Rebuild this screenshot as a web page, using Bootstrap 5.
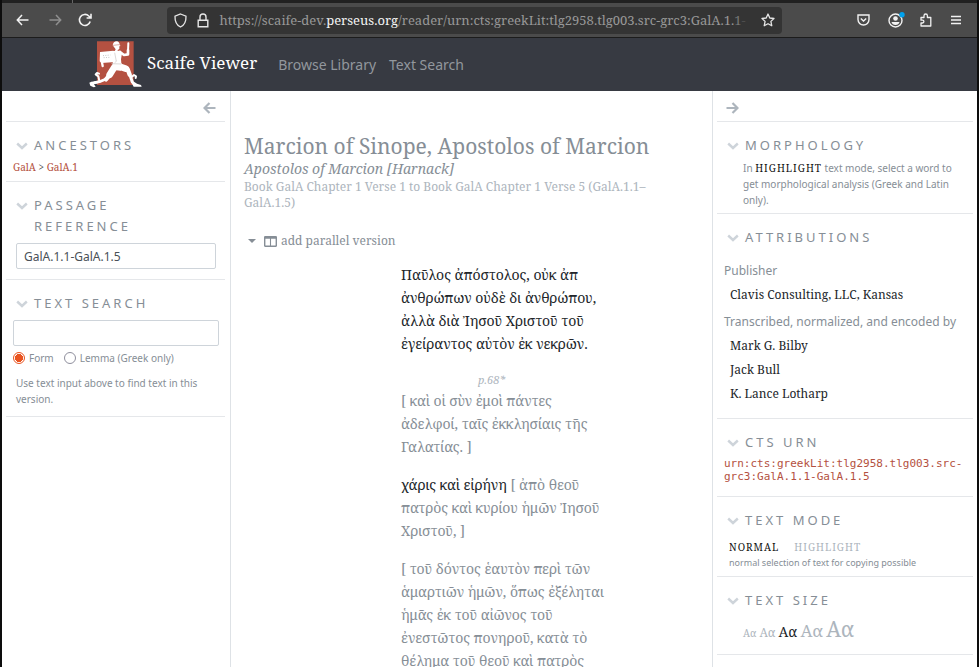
<!DOCTYPE html>
<html lang="en">
<head>
<meta charset="utf-8">
<meta name="viewport" content="width=device-width, initial-scale=1">
<title>Scaife Viewer</title>
<link href="https://cdn.jsdelivr.net/npm/bootstrap@5.3.0/dist/css/bootstrap.min.css" rel="stylesheet">
<style>
:root { --serif: "Noto Serif", "Liberation Serif", serif; --sans: "Noto Sans", "Open Sans", sans-serif; }
body { font-family: var(--sans); font-size: 12px; line-height: 24px; color: #868e96; background: #fff; }
.serif { font-family: var(--serif); }
.window-frame { height: 100vh; overflow: hidden; border: solid #0d0d0d; border-width: 0 2px; }
.tab-strip { height: 3px; background: #212121; }
.tab-strip span { width: 71px; border-right: 1px solid #666; }
.toolbar { height: 35px; padding: 0 16px 0 14px; background: #4b4b4b; border-bottom: 1px solid #1c1c1c; color: #f2f2f2; }
.tool-btn { border: 0; background: none; padding: 0; color: inherit; line-height: 0; }
.tool-btn.off { color: #8f8f8f; }
.tool-group { gap: 14px; }
.address { width: 65%; height: 27px; gap: 7px; padding: 0 7px; background: #343434; border-radius: 4px; }
.address-text { font-family: var(--serif); font-size: 13px; color: #989898; min-width: 0; }
.address-text b { font-weight: 400; color: #f4f4f4; }
.address-text .fade-a { color: #777; }
.address-text .fade-b { color: #4d4d4d; }
.site-bar { height: 53px; background: #373a42; padding-left: 85px; }
.site-bar .brand-text { font-family: var(--serif); font-size: 17px; color: #fff; padding-bottom: 4px; }
.site-bar a { text-decoration: none; }
.site-bar .site-link { font-size: 14px; color: #92979d; margin-left: 21px; }
.site-bar .site-link + .site-link { margin-left: 13px; }
.side { flex: none; }
.side-left { width: 229px; padding: 0 5px 0 4px; border-right: 1px solid #dee2e6; }
.side-right { width: 265px; padding: 0 4px; border-left: 1px solid #dee2e6; }
.collapse-row { height: 30px; padding: 3px 9px 0; color: #adb5bd; }
.pane { border-top: 1px solid #e5e7ea; padding: 13px 6px 0 7px; }
.pane-end { border-top: 1px solid #e5e7ea; }
.pane-title { font-size: 13px; line-height: 21px; font-weight: 400; letter-spacing: 3px; text-transform: uppercase; margin: 0; padding-left: 3px; color: #868e96; }
.pane-title button { text-transform: inherit; letter-spacing: inherit; color: inherit; border: 0; background: none; padding: 0; text-align: left; }
.pane-title svg { flex: none; margin: 7px 6px 0 0; }
.crumbs { font-family: var(--serif); font-size: 10px; line-height: 22px; color: #444; padding-bottom: 3px; }
.red, .crumbs a { color: #b45141; text-decoration: none; }
.field { height: 26px; min-height: 0; margin-top: 6px; padding: 0 7px; border: 1px solid #ced4da; border-radius: 2px; font-size: 12px; color: #495057; }
.inset { padding: 0 3px 10px; }
.note { font-size: 10px; line-height: 16px; }
.note-search { padding: 9px 3px 9px; }
.note-morph { padding: 4px 0 5px 19px; }
.radio-line label { font-size: 10px; line-height: 16px; }
.radio-line label:first-of-type { margin-right: 10px; }
.radio-line .form-check-input { width: 12px; height: 12px; margin: 0 4px 0 0; border: 1px solid #8f8f9d; flex: none; }
.radio-line .form-check-input:checked { border-color: #e95420; background: radial-gradient(circle, #e95420 0 4px, #fff 4px); }
.reader { padding: 42px 60px 0 13px; min-width: 0; }
.title { font-size: 21px; line-height: 26px; color: #868e96; margin: 0; font-weight: 400; }
.edition { font-size: 14px; line-height: 20px; font-style: italic; margin: 0; font-weight: 400; }
.range { font-size: 12px; line-height: 16px; color: #adb5bd; }
.parallel { border: 0; background: none; padding: 0; color: #868e96; font-size: 12px; line-height: 20px; }
.passage { margin-left: 157px; font-size: 14px; line-height: 23px; color: #868e96; white-space: nowrap; }
.passage p { margin: 0 0 15px; }
.passage .ink { color: #212529; }
.page-mark { font-size: 11px; line-height: 19px; font-style: italic; color: #adb5bd; padding-left: 77px; }
.caps { font-family: var(--serif); letter-spacing: 1px; text-transform: uppercase; font-size: 10px; text-decoration: none; }
.ink, .ink:hover { color: #111; }
.credits { padding: 11px 0 12px; }
.credit-role + .credit + .credit-role { margin-top: 3px; }
.credit { font-family: var(--serif); color: #212529; padding-left: 6px; }
.urn { font-family: "DejaVu Sans Mono", monospace; font-size: 11px; line-height: 13px; padding: 4px 0 13px; }
.modes { padding: 8px 0 5px 5px; }
.modes .caps:first-child { margin-right: 15px; }
.modes div { font-size: 9px; }
.pale, .sizes a { color: #adb5bd; text-decoration: none; }
.sizes { font-family: var(--serif); line-height: 30px; padding: 3px 0 6px 19px; }
.sizes .s1 { font-size: 10px; }
.sizes .s2 { font-size: 12px; }
.sizes .s3 { font-size: 14px; color: #212529; }
.sizes .s4 { font-size: 17px; }
.sizes .s5 { font-size: 21px; }
</style>
<script src="https://cdn.jsdelivr.net/npm/bootstrap@5.3.0/dist/js/bootstrap.bundle.min.js" defer></script>
</head>
<body>
<svg class="d-none">
  <symbol id="chev" viewBox="0 0 12 8"><path d="M1.2 1.5 6 6l4.800-4.500" fill="none" stroke="#ced4da" stroke-width="2.400"/></symbol>
</svg>
<div class="window-frame d-flex flex-column">
  <div class="tab-strip d-flex flex-shrink-0"><span></span></div>
  <div class="toolbar d-flex align-items-center flex-shrink-0">
    <button class="tool-btn" aria-label="Back"><svg width="13" height="12" viewBox="0 0 13 12" fill="none" stroke="currentColor" stroke-width="1.500"><path d="M12.500 6H1.500M6 1 1.300 6 6 11"/></svg></button>
    <button class="tool-btn off ms-3 ps-1" aria-label="Forward"><svg width="13" height="12" viewBox="0 0 13 12" fill="none" stroke="currentColor" stroke-width="1.500"><path d="M.5 6h11M7 1l4.700 5L7 11"/></svg></button>
    <button class="tool-btn ms-3" aria-label="Reload"><svg width="14" height="14" viewBox="0 0 14 14" fill="none" stroke="currentColor" stroke-width="1.600"><path d="M12.200 8.500A5.500 5.500 0 1 1 10.800 3l1.500 1.500M13 .8V5H8.600"/></svg></button>
    <div class="address d-flex align-items-center ms-auto">
      <svg class="flex-shrink-0" width="13" height="15" viewBox="0 0 13 15" fill="none" stroke="#e6e6e6" stroke-width="1.300"><path d="M6.500 1 12 3.200C12.200 8 10.500 12 6.500 14 2.500 12 .8 8 1 3.200z"/></svg>
      <svg class="flex-shrink-0" width="18" height="15" viewBox="0 0 18 15" fill="none" stroke="#e6e6e6" stroke-width="1.400"><path d="M4.200 7.200h9.600v6.500H4.200zM6 7V4a3 3 0 0 1 6 0v3"/></svg>
      <div class="address-text flex-grow-1 text-nowrap" role="textbox" contenteditable="true" spellcheck="false" aria-label="Address">https://scaife-dev.<b>perseus.org</b>/reader/urn:cts:greekLit:tlg2958.tlg003.src-grc3:GalA.1.<span class="fade-a">1</span><span class="fade-b">-</span></div>
      <button class="tool-btn flex-shrink-0" aria-label="Bookmark"><svg width="14" height="14" viewBox="0 0 14 14" fill="none" stroke="#e6e6e6" stroke-width="1.300" stroke-linejoin="round"><path d="m7 1 1.800 4 4.200.500-3.100 2.900.9 4.400L7 10.700l-3.800 2.100.9-4.400L1 5.500 5.200 5z"/></svg></button>
    </div>
    <div class="tool-group d-flex align-items-center ms-auto">
      <button class="tool-btn me-1" aria-label="Pocket"><svg width="13" height="12" viewBox="0 0 13 12" fill="none" stroke="currentColor" stroke-width="1.400"><path d="M1 1h11v4.500a5.500 5.500 0 0 1-11 0zM3.800 4.500l2.700 2.600 2.700-2.600"/></svg></button>
      <button class="tool-btn" aria-label="Account"><svg width="17" height="16" viewBox="0 0 17 16"><circle cx="7.500" cy="8.500" r="6.500" fill="none" stroke="currentColor" stroke-width="1.400"/><circle cx="7.500" cy="6.500" r="2.300" fill="currentColor"/><path d="M3.500 10h8c-.5 4-7.500 4-8 0z" fill="currentColor"/><circle cx="14" cy="2.800" r="2.700" fill="#00a2ee"/></svg></button>
      <button class="tool-btn" aria-label="Extensions"><svg width="14" height="14" viewBox="0 0 14 14" fill="none" stroke="currentColor" stroke-width="1.300" stroke-linejoin="round"><path d="M5 4.500V2.700a1.700 1.700 0 0 1 3.400 0v1.800h3.400v8.500H2v-3h1.500a1.400 1.400 0 0 0 0-2.800H2V4.500z"/></svg></button>
      <button class="tool-btn ms-1" aria-label="Menu"><svg width="10" height="10" viewBox="0 0 10 10" stroke="currentColor" stroke-width="1.300"><path d="M0 1.500h10M0 5h10M0 8.500h10"/></svg></button>
    </div>
  </div>

  <nav class="site-bar d-flex align-items-center flex-shrink-0">
    <a href="#" class="d-flex align-items-center">
      <svg width="56" height="50" viewBox="-3 4 168 150">
        <path fill="#b45141" d="M27 8h110v131H27z"/>
        <g fill="none" stroke="#fff" stroke-linejoin="round" stroke-linecap="round">
          <path stroke-width="8" d="M96 40l12 9 12-2 0-12"/>
          <path stroke-width="6" d="M120 40l1-26"/>
          <path stroke-width="7" d="M41 66l3 16"/>
          <path stroke-width="20" d="M95 84l18 6"/>
          <path stroke-width="13" d="M119 92l6 16"/>
          <path stroke-width="9" d="M124 104l9 26"/>
          <path stroke-width="20" d="M79 86l-14 22"/>
          <path stroke-width="13" d="M66 108l-12 14"/>
          <path stroke-width="8" d="M56 120l-18 8-18 4"/>
          <path stroke-width="6" d="M34 126l-3-13-8-6 4-4 6 2M130 116l8-7 6 4-1 5"/>
        </g>
        <g fill="#fff">
          <path d="M74 20q2-12 12-12 9 1 9 12l3 2-4 1v8l-6 4 3 3h-11l3-6-5-7z"/>
          <path d="M36 40l40-4 5 4v30l-40 3-6-5z"/>
          <path d="M76 37l22-1 4 8-3 18 1 11 6 11-8 12-28-3 4-16z"/>
          <path d="M4 132l6-3 14-1 8 5-14 4 5 7-6 2-10-5zM128 128l10 1 9 6 12 4 2 5h-24z"/>
        </g>
        <path fill="none" stroke="#b45141" stroke-width="1.500" d="M75 20l19-2"/>
        <path fill="none" stroke="#c9c4c2" stroke-width="2" d="M80 42l5 26-5 4M70 75l30 1"/>
        <path fill="none" stroke="#aaa" stroke-width="2" stroke-dasharray="3 4" d="M45 51l22-2M47 57l20-1"/>
      </svg>
      <span class="brand-text ms-1">Scaife Viewer</span>
    </a>
    <a href="#" class="site-link">Browse Library</a>
    <a href="#" class="site-link">Text Search</a>
  </nav>

  <div class="d-flex flex-grow-1">
    <aside class="side side-left">
      <div class="collapse-row d-flex align-items-center justify-content-end"><button class="tool-btn" aria-label="Collapse left panel"><svg width="13" height="12" viewBox="0 0 13 12" fill="none" stroke="currentColor" stroke-width="2.200"><path d="M12.500 6H2M6.500 1l-5 5 5 5"/></svg></button></div>
      <section class="pane">
        <h2 class="pane-title"><button class="d-flex"><svg width="12" height="8"><use href="#chev"/></svg>Ancestors</button></h2>
        <div class="crumbs"><a href="#">GalA</a> &gt; <a href="#">GalA.1</a></div>
      </section>
      <section class="pane">
        <h2 class="pane-title"><button class="d-flex"><svg width="12" height="8"><use href="#chev"/></svg><span>Passage<br>Reference</span></button></h2>
        <div class="inset"><input class="form-control field" type="text" aria-label="Passage reference" value="GalA.1.1-GalA.1.5"></div>
      </section>
      <section class="pane">
        <h2 class="pane-title"><button class="d-flex"><svg width="12" height="8"><use href="#chev"/></svg>Text Search</button></h2>
        <input class="form-control field" type="text" aria-label="Text search">
        <div class="radio-line d-flex pt-1">
          <input class="form-check-input align-self-center" type="radio" name="kind" id="form" checked><label for="form">Form</label>
          <input class="form-check-input align-self-center" type="radio" name="kind" id="lemma"><label for="lemma">Lemma (Greek only)</label>
        </div>
        <div class="note note-search">Use text input above to find text in this version.</div>
      </section>
      <div class="pane-end"></div>
    </aside>

    <main class="reader serif flex-grow-1">
      <h1 class="title">Marcion of Sinope, Apostolos of Marcion</h1>
      <h2 class="edition">Apostolos of Marcion [Harnack]</h2>
      <div class="range">Book GalA Chapter 1 Verse 1 to Book GalA Chapter 1 Verse 5 (GalA.1.1–<br>GalA.1.5)</div>
      <button class="parallel d-flex align-items-center mt-3 ms-1 pt-1"><svg class="me-2" width="8" height="5" viewBox="0 0 8 5"><path d="M0 0h8L4 4z" fill="#868e96"/></svg><svg class="me-1" width="13" height="11" viewBox="0 0 12 10"><path d="M1 0h10A1 1 0 0 1 12 1v8A1 1 0 0 1 11 10H1A1 1 0 0 1 0 9V1A1 1 0 0 1 1 0zM1.300 2.500v6.200h4.200V2.500zm5.200 0v6.200h4.200V2.500z" fill="#868e96" fill-rule="evenodd"/></svg>add parallel version</button>
      <div class="passage mt-2 pt-1" lang="grc">
        <p class="ink">Παῦλος ἀπόστολος, οὐκ ἀπ<br>ἀνθρώπων οὐδὲ δι ἀνθρώπου,<br>ἀλλὰ διὰ Ἰησοῦ Χριστοῦ τοῦ<br>ἐγείραντος αὐτὸν ἐκ νεκρῶν.</p>
        <div class="page-mark">p.68*</div>
        <p>[ καὶ οἱ σὺν ἐμοὶ πάντες<br>ἀδελφοί, ταῖς ἐκκλησίαις τῆς<br>Γαλατίας. ]</p>
        <p><span class="ink">χάρις καὶ εἰρήνη</span> [ ἀπὸ θεοῦ<br>πατρὸς καὶ κυρίου ἡμῶν Ἰησοῦ<br>Χριστοῦ, ]</p>
        <p>[ τοῦ δόντος ἑαυτὸν περὶ τῶν<br>ἁμαρτιῶν ἡμῶν, ὅπως ἐξέληται<br>ἡμᾶς ἐκ τοῦ αἰῶνος τοῦ<br>ἐνεστῶτος πονηροῦ, κατὰ τὸ<br>θέλημα τοῦ θεοῦ καὶ πατρὸς</p>
      </div>
    </main>

    <aside class="side side-right">
      <div class="collapse-row d-flex align-items-center"><button class="tool-btn" aria-label="Collapse right panel"><svg width="13" height="12" viewBox="0 0 13 12" fill="none" stroke="currentColor" stroke-width="2.200"><path d="M.5 6H11M6.500 1l5 5-5 5"/></svg></button></div>
      <section class="pane">
        <h2 class="pane-title"><button class="d-flex"><svg width="12" height="8"><use href="#chev"/></svg>Morphology</button></h2>
        <div class="note note-morph">In <span class="caps ink">highlight</span> text mode, select a word to<br>get morphological analysis (Greek and Latin<br>only).</div>
      </section>
      <section class="pane">
        <h2 class="pane-title"><button class="d-flex"><svg width="12" height="8"><use href="#chev"/></svg>Attributions</button></h2>
        <div class="credits">
          <div class="credit-role">Publisher</div>
          <div class="credit">Clavis Consulting, LLC, Kansas</div>
          <div class="credit-role">Transcribed, normalized, and encoded by</div>
          <div class="credit">Mark G. Bilby</div>
          <div class="credit">Jack Bull</div>
          <div class="credit">K. Lance Lotharp</div>
        </div>
      </section>
      <section class="pane">
        <h2 class="pane-title"><button class="d-flex"><svg width="12" height="8"><use href="#chev"/></svg>CTS URN</button></h2>
        <a href="#" class="urn red d-block">urn:cts:greekLit:tlg2958.tlg003.src-<br>grc3:GalA.1.1-GalA.1.5</a>
      </section>
      <section class="pane">
        <h2 class="pane-title"><button class="d-flex"><svg width="12" height="8"><use href="#chev"/></svg>Text Mode</button></h2>
        <div class="modes note"><a href="#" class="caps ink">Normal</a><a href="#" class="caps pale">Highlight</a><div>normal selection of text for copying possible</div></div>
      </section>
      <section class="pane">
        <h2 class="pane-title"><button class="d-flex"><svg width="12" height="8"><use href="#chev"/></svg>Text Size</button></h2>
        <div class="sizes"><a href="#" class="s1">Αα</a> <a href="#" class="s2">Αα</a> <a href="#" class="s3">Αα</a> <a href="#" class="s4">Αα</a> <a href="#" class="s5">Αα</a></div>
      </section>
      <div class="pane-end"></div>
    </aside>
  </div>
</div>
</body>
</html>
